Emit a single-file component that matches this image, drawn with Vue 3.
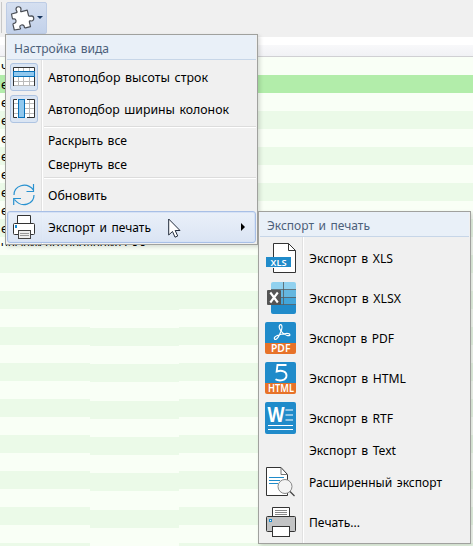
<script setup>
const mainGroups = [
  [
    { text: 'Автоподбор высоты строк', icon: 'rows', w: 160 },
    { text: 'Автоподбор ширины колонок', icon: 'cols', w: 181 }
  ],
  [
    { text: 'Раскрыть все', small: true, w: 79 },
    { text: 'Свернуть все', small: true, w: 79 }
  ],
  [
    { text: 'Обновить', icon: 'refresh', w: 59 },
    { text: 'Экспорт и печать', icon: 'printerSmall', active: true, w: 103 }
  ]
]
const exportItems = [
  { text: 'Экспорт в XLS', icon: 'xls', w: 84 },
  { text: 'Экспорт в XLSX', icon: 'xlsx', w: 92 },
  { text: 'Экспорт в PDF', icon: 'pdf', w: 85 },
  { text: 'Экспорт в HTML', icon: 'html', w: 97 },
  { text: 'Экспорт в RTF', icon: 'rtf', w: 84 },
  { text: 'Экспорт в Text', small: true, w: 87 },
  { text: 'Расширенный экспорт', icon: 'preview', w: 133 },
  { text: 'Печать...', icon: 'printer', w: 51 }
]
const side = Array(28).fill(18)
const middle = side.map((h, i) => ([13, 18, 24].includes(i) ? 19 : h))
const columns = [
  { cls: 'c-first', heights: side },
  { cls: 'c-mid', heights: middle },
  { cls: 'c-rest', heights: side }
]
const cells = ['ч', 'е', 'е', 'е', 'е', 'е', 'е', 'е', 'е', 'е']
</script>

<template>
  <div class="window">
    <div class="toolbar">
      <span class="grip"></span>
      <div class="tool-btn">
        <svg width="25" height="25" viewBox="0 0 25 25">
          <path d="M1.500 8L6.500 6.700C8 6.200 6 4.600 6 3.300C6 0 10.800-.1 11 3C11.100 4.600 9.900 6 11.500 5.600L17.200 4.200L18.500 9.300C19 11 20 9.900 21.300 9.900C24.500 10 24.500 15 21.500 15C20 15 19 14.300 19.400 16L20.500 20.600L15.500 21.800C13.800 22.100 14.700 20.800 14 19.800C12.800 18.200 9.500 18.800 9.800 21C10 22.200 11.300 22.700 9.800 23.100L4.300 24L3 18.700C2.700 17.200 4 17.700 5 17C6.900 15.700 6 12.600 4 12.800C2.800 13 2.600 13.500 2.300 12Z" fill="#fff" stroke="#4a4e55" stroke-width="1.200" stroke-linejoin="round" />
        </svg>
        <span class="drop"></span>
      </div>
    </div>
    <div class="grid-top"></div>
    <div class="grid-head"></div>
    <div class="grid-body">
      <div v-for="c in columns" :key="c.cls" class="column" :class="c.cls">
        <div v-for="(h, i) in c.heights" :key="i" class="cell" :class="{ odd: i % 2, sel: i === 1 }" :style="{ height: h + 'px' }"></div>
      </div>
    </div>
    <div class="labels">
      <div v-for="(t, i) in cells" :key="i" class="label">{{ t }}</div>
      <div class="label last">ческий потребления СКЗ</div>
    </div>

    <div class="menu main">
      <div class="title"><svg width="97" height="20"><text x="0" y="14" textLength="95" lengthAdjust="spacingAndGlyphs" class="tt">Настройка вида</text></svg></div>
      <div class="list">
        <template v-for="(g, gi) in mainGroups" :key="gi">
          <div v-if="gi" class="sep"></div>
          <div v-for="it in g" :key="it.text" class="item" :class="{ small: it.small, active: it.active }">
            <div class="ico" :class="{ checked: it.icon === 'rows' || it.icon === 'cols' }">
              <svg v-if="it.icon === 'rows'" width="22" height="20" viewBox="0 0 22 20">
                <rect x=".5" y=".5" width="21" height="18" fill="#fff" />
                <path d="M5.500 0V19M10.500 0V19M16.500 0V19M1 14.500H21M1 18.500H21" stroke="#bbb" />
                <path d="M.5 19V.5H21.500V19" fill="none" stroke="#333" />
                <rect x=".5" y="4.500" width="21" height="5" fill="#91c8ee" stroke="#0870b8" />
              </svg>
              <svg v-else-if="it.icon === 'cols'" width="22" height="20" viewBox="0 0 22 20">
                <rect x=".5" y=".5" width="21" height="18" fill="#fff" />
                <path d="M1 4.500H21M1 9.500H21M1 14.500H21M16.500 1V19" stroke="#bbb" />
                <path d="M4 .5H.5V18.500H4M14 .5H21.500V18.500H14" fill="none" stroke="#333" />
                <rect x="5.500" y=".5" width="6" height="18" fill="#91c8ee" stroke="#0870b8" />
              </svg>
              <svg v-else-if="it.icon === 'refresh'" width="22" height="24" viewBox="0 0 22 24">
                <path d="M1 12C1 3 13-2 20.500 7M20.500 1V8.500H13.500M21 12C21 21 9 26 1.500 16.500M.7 22V15.500H8" fill="none" stroke="#2992d0" stroke-width="1.200" />
              </svg>
              <svg v-else-if="it.icon === 'printerSmall'" width="22" height="24" viewBox="0 0 22 24">
                <path d="M4.500 10V.5H17.500V10" fill="#fff" stroke="#333" />
                <rect x=".5" y="8.500" width="21" height="11" rx="1" fill="#fff" stroke="#333" />
                <rect x="2" y="10" width="2" height="3" fill="#1688d0" />
                <rect x="5.500" y="15.500" width="12" height="8" fill="#eee" stroke="#444" />
                <path d="M7 18.500H16M7 20.500H16" stroke="#999" />
              </svg>
            </div>
            <svg class="txt" :width="it.w + 2" height="20"><text x="0" y="15" :textLength="it.w" lengthAdjust="spacingAndGlyphs">{{ it.text }}</text></svg>
            <span v-if="it.active" class="arrow"></span>
          </div>
        </template>
      </div>
    </div>

    <div class="menu sub">
      <div class="title"><svg width="105" height="20"><text x="0" y="14" textLength="103" lengthAdjust="spacingAndGlyphs" class="tt">Экспорт и печать</text></svg></div>
      <div class="list">
        <div v-for="it in exportItems" :key="it.text" class="item" :class="{ small: it.small }">
          <div class="ico">
            <svg v-if="it.icon" width="32" height="32" viewBox="0 0 32 32">
              <g v-if="it.icon === 'xls'">
                <path d="M8.500 1.500H23.500L30.500 8.500V30.500H8.500Z" fill="#fff" />
                <path d="M8.500 15V1.500H23.500L30.500 8.500V30.500H8.500V26M23.500 1.500V8.500H30.500" fill="none" stroke="#333" />
                <rect x="1" y="15" width="25" height="10" fill="#208bca" />
                <text x="5.500" y="23.500" textLength="16" lengthAdjust="spacingAndGlyphs" class="badge xs">XLS</text>
              </g>
              <g v-else-if="it.icon === 'xlsx'">
                <path d="M6 8V2Q6 0 8 0H29Q31 0 31 2V8Z" fill="#91d1ef" />
                <path d="M6 8H31V15H6Z" fill="#65b7df" />
                <path d="M6 15H31V23H6Z" fill="#43a6da" />
                <path d="M6 23H31V30Q31 32 29 32H8Q6 32 6 30Z" fill="#208bca" />
                <path d="M18.500 0V23M6 7.500H31M6 15.500H31M6 22.500H31" stroke="#555c60" stroke-opacity=".8" />
                <rect x="2" y="8" width="14" height="15" rx="1" fill="#555" />
                <path d="M5.300 10.500L12.800 20.500M12.800 10.500L5.300 20.500" stroke="#fff" stroke-width="2.100" />
              </g>
              <g v-else-if="it.icon === 'pdf' || it.icon === 'html'">
                <path d="M0 21V2Q0 0 2 0H29Q31 0 31 2V21Z" fill="#208bca" />
                <path d="M0 21H31V30Q31 32 29 32H2Q0 32 0 30Z" fill="#e77228" />
                <template v-if="it.icon === 'pdf'">
                  <path d="M9.500 17C8 14.500 14.500 12 21 11.500C26 11.200 26 14.500 22 13.500C18 12.500 13 6.500 14.500 3.500C16 1 18 4 16.500 8C14.500 13.500 11.500 19 9.500 17Z" fill="none" stroke="#fff" stroke-width="1.200" />
                  <text x="6" y="30" textLength="19.500" lengthAdjust="spacingAndGlyphs" class="badge">PDF</text>
                </template>
                <template v-else>
                  <path d="M21.500 3H12.500L11.700 9.500C17 7.800 21.500 9.500 21.500 13.500C21.500 18.500 14.500 19.700 10.500 17.300" fill="none" stroke="#fff" stroke-width="1.900" />
                  <text x="3" y="30" textLength="26" lengthAdjust="spacingAndGlyphs" class="badge">HTML</text>
                </template>
              </g>
              <g v-else-if="it.icon === 'rtf'">
                <rect width="31" height="32" rx="2" fill="#208bca" />
                <text x="2.500" y="20" textLength="17" lengthAdjust="spacingAndGlyphs" class="word">W</text>
                <path d="M20.500 8H28M20.500 13H28M20.500 18H28M3 23.500H28M3 27.500H28" stroke="#fff" stroke-width="1.200" />
              </g>
              <g v-else-if="it.icon === 'preview'">
                <path d="M1.500 1.500H16L22.500 8.500V29.500H1.500Z" fill="#fff" stroke="#333" />
                <path d="M16 1.500V8.500H22.500" fill="none" stroke="#777" />
                <path d="M4 11.500H19M4 14.500H15M4 17.500H13" stroke="#208bca" />
                <circle cx="20" cy="20.500" r="7" fill="#f4f4f4" stroke="#888" />
                <path d="M25 25.500L29.500 30" stroke="#444" stroke-width="1.300" />
              </g>
              <g v-else>
                <path d="M7.500 12V1.500H24.500V12" fill="#fff" stroke="#333" />
                <path d="M10 4.500H22M10 6.500H22M10 8.500H22" stroke="#888" />
                <rect x="1.500" y="10.500" width="29" height="15" rx="1" fill="#c2c3c4" stroke="#333" />
                <rect x="4.500" y="13.500" width="2" height="2" fill="#fff" stroke="#168bd2" />
                <rect x="7.500" y="20.500" width="17" height="10" fill="#fff" stroke="#333" />
              </g>
            </svg>
          </div>
          <svg class="txt" :width="it.w + 2" height="20"><text x="0" y="15" :textLength="it.w" lengthAdjust="spacingAndGlyphs">{{ it.text }}</text></svg>
        </div>
      </div>
    </div>

    <svg class="pointer" width="13" height="21" viewBox="0 0 13 21">
      <path d="M.7 1V17L4.500 13.500L7 19.200L9.700 18L7.200 12.500H12Z" fill="#fff" stroke="#222c3c" stroke-width="1" />
    </svg>
  </div>
</template>

<style>
body { margin: 0; }
</style>
<style scoped>
.window { position: relative; width: 473px; height: 546px; overflow: hidden; background: #f9fff6; font: 13px "Noto Sans", "Open Sans", sans-serif; color: #000; }
.toolbar { box-sizing: border-box; height: 37px; padding: 2px 0 0 1px; display: flex; align-items: flex-start; background: #f0f0f0; }
.grip { width: 1px; height: 31px; margin-right: 4px; background: #c8c8c8; }
.tool-btn { box-sizing: border-box; width: 41px; height: 32px; padding-left: 3px; display: flex; align-items: center; gap: 2px; border: 1px solid #bdcce5; border-radius: 2px; background: linear-gradient(#d5dff0, #c2d1ea); }
.drop { border: 3px solid transparent; border-top-color: #17355c; border-bottom: 0; margin-top: -2px; }
.grid-top { height: 8px; background: #fff; }
.grid-head { height: 11px; border-bottom: 1px solid #d0d0d3; background: linear-gradient(#f8f8fa, #f1f2f5); }
.grid-body { display: flex; height: 489px; overflow: hidden; }
.c-first { width: 90px; }
.c-mid { width: 89px; }
.c-rest { flex: 1; }
.cell { background: #f9fff6; }
.cell.odd { background: #ebfae8; }
.cell.sel { background: #b2edaa; }
.labels { position: absolute; left: 0; top: 57px; width: 160px; height: 189px; overflow: hidden; }
.label { height: 18px; line-height: 18px; padding-left: 1px; }
.label.last { white-space: nowrap; font-size: 12px; }
.menu { position: absolute; box-sizing: border-box; border: 1px solid #a0a19e; background: #f0f0f0; box-shadow: 2px 2px 4px rgba(0, 0, 0, .14); display: flex; flex-direction: column; }
.main { left: 5px; top: 34px; width: 253px; height: 211px; }
.sub { left: 258px; top: 211px; width: 213px; height: 333px; }
.title { box-sizing: border-box; height: 25px; margin: 0 1px; padding: 4px 0 0 7px; border-bottom: 1px solid #c7d6e8; background: #e9f0f8; }
.title svg { display: block; overflow: visible; }
.tt, .txt text { word-spacing: 1.5px; }
.tt { fill: #4c607a; }
.list { flex: 1; padding: 1px 1px 0; background: linear-gradient(90deg, transparent 35px, #e1e1e1 35px, #e1e1e1 36px, #fff 36px, #fff 37px, transparent 37px); }
.sub .list { background: linear-gradient(90deg, transparent 43px, #e1e1e1 43px, #e1e1e1 44px, #fff 44px, #fff 45px, transparent 45px); }
.item { box-sizing: border-box; height: 32px; display: flex; align-items: center; }
.sub .item { height: 40px; }
.item.small, .sub .item.small { height: 24px; }
.item.active { border: 1px solid #a8bfe6; border-radius: 3px; background: linear-gradient(rgba(233, 240, 250, .9), rgba(216, 227, 244, .9)); box-shadow: inset 0 0 0 1px #d6e2f5; }
.ico { box-sizing: border-box; width: 28px; height: 28px; margin: 0 10px 0 3px; display: flex; align-items: center; justify-content: center; flex: none; }
.ico svg { overflow: visible; }
.active .ico { margin-left: 2px; }
.checked { border: 1px solid #aec4e2; border-radius: 3px; background: #dae5f3; }
.sub .ico { width: 32px; height: 32px; margin: 0 12px 0 5px; }
.txt { display: block; flex: none; overflow: visible; }
.sep { height: 1px; margin: 1px 0 0 37px; border-bottom: 1px solid #fff; background: #dcdcdc; }
.arrow { margin: 0 10px 0 auto; border: 4px solid transparent; border-left: 4px solid #000; border-right: 0; }
.badge { font-size: 10px; font-weight: 600; fill: #fff; }
.badge.xs { font-size: 9px; }
.word { font-size: 21px; font-weight: 700; fill: #fff; }
.pointer { position: absolute; left: 168px; top: 218px; }
</style>
